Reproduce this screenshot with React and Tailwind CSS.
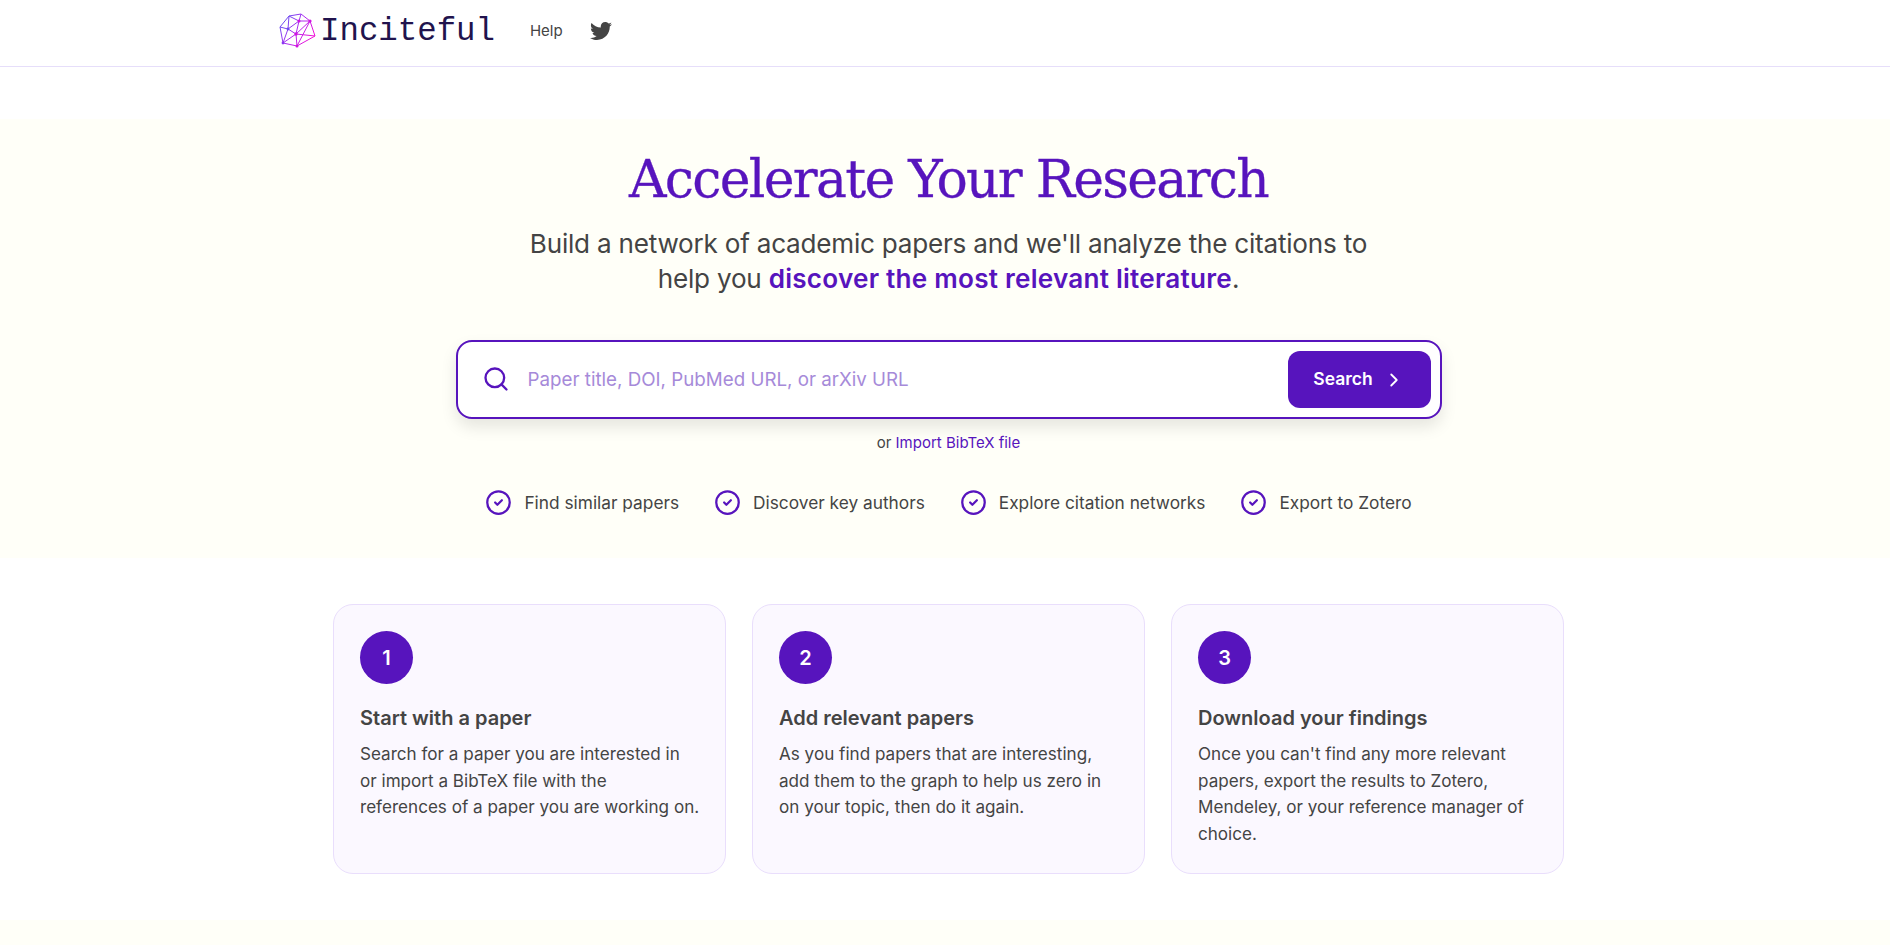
import React from 'react'
import { Search, ChevronRight, CircleCheck } from 'lucide-react'
import { FaTwitter } from 'react-icons/fa'

const features = ['Find similar papers', 'Discover key authors', 'Explore citation networks', 'Export to Zotero']

const steps = [
  {
    title: 'Start with a paper',
    lines: ['Search for a paper you are interested in', 'or import a BibTeX file with the', 'references of a paper you are working on.'],
  },
  {
    title: 'Add relevant papers',
    lines: ['As you find papers that are interesting,', 'add them to the graph to help us zero in', 'on your topic, then do it again.'],
  },
  {
    title: 'Download your findings',
    lines: ["Once you can't find any more relevant", 'papers, export the results to Zotero,', 'Mendeley, or your reference manager of', 'choice.'],
  },
]

function Logo() {
  return (
    <svg viewBox="0 0 38 36" className="w-[38px] h-[36px]" fill="none" strokeWidth="1">
      <defs>
        <linearGradient id="logo-grad" x1="0" y1="0" x2="1" y2="0.6">
          <stop offset="0" stopColor="#4f5bf0" />
          <stop offset="0.55" stopColor="#a92cf0" />
          <stop offset="1" stopColor="#f010d8" />
        </linearGradient>
      </defs>
      <g stroke="url(#logo-grad)">
        <path d="M10 3 L22 1 L31 8 L36 23 L17 21 L4 30 L1 14 L10 3 Z" />
        <path d="M10 3 L20 8 L31 8 L17 21 L20 8 M22 1 L20 8 L9 16 L1 14 M9 16 L17 21 L18 33 L4 30 L9 16 M10 3 L9 16 M31 8 L18 33 M36 23 L18 33" />
      </g>
      <g fill="#d014e0">
        <circle cx="20" cy="8" r="1.5" />
        <circle cx="31" cy="8" r="1.6" />
        <circle cx="17" cy="21" r="1.7" />
        <circle cx="18" cy="33" r="1.5" />
        <circle cx="4" cy="30" r="1.4" fill="#8a35f0" />
        <circle cx="9" cy="16" r="1.4" fill="#6a4df0" />
      </g>
    </svg>
  )
}

export default function App() {
  return (
    <div className="min-h-[945px] bg-white text-[#444444] font-['Inter','Open_Sans',sans-serif] overflow-hidden">
      {/* Header */}
      <header className="h-[67px] border-b border-[#e6defa] bg-white">
        <div className="flex items-center h-[62px] pl-[279px]">
          <Logo />
          <span className="ml-[3px] mt-[2px] text-[32.4px] leading-none text-[#21134d] font-['Liberation_Mono',monospace]">Inciteful</span>
          <a className="ml-[35px] text-[15px] text-[#444444]">Help</a>
          <FaTwitter className="ml-[27px] w-[22px] h-[22px] text-[#444444]" />
        </div>
      </header>

      {/* Hero */}
      <section className="mt-[52px] h-[439px] bg-[#fffff8] flex flex-col items-center pl-[7px]">
        <h1 className="mt-[28px] text-[52px] leading-[64px] text-[#5714bd] font-['DejaVu_Serif',serif] tracking-[-1.7px] [-webkit-text-stroke:0.3px_#5714bd]">Accelerate Your Research</h1>
        <p className="mt-[15px] text-center text-[26.1px] leading-[35px] tracking-[-0.22px]">
          Build a network of academic papers and we'll analyze the citations to
          <br />
          help you <strong className="font-semibold text-[#5714bd] tracking-[0.24px]">discover the most relevant literature</strong>.
        </p>
        <div className="mt-[44px] w-[986px] h-[79px] flex items-center rounded-[16px] border-2 border-[#5714bd] bg-white shadow-[0_8px_16px_rgba(0,0,0,0.1)] pl-[24px] pr-[9px]">
          <Search className="w-[28px] h-[28px] -mt-[1px] text-[#5714bd]" strokeWidth={2} />
          <span className="ml-[18px] mt-[1px] flex-1 text-[18.75px] text-[#a68ad9]">Paper title, DOI, PubMed URL, or arXiv URL</span>
          <button className="w-[143px] h-[57px] rounded-[12px] bg-[#5714bd] text-white font-semibold text-[17.5px] flex items-center justify-center gap-[10px]">
            Search
            <ChevronRight className="w-[22px] h-[22px]" strokeWidth={2} />
          </button>
        </div>
        <p className="mt-[14px] text-[15px] leading-[20px]">
          or <a className="text-[#5714bd]">Import BibTeX file</a>
        </p>
        <ul className="mt-[36px] flex items-center gap-[35px]">
          {features.map((f) => (
            <li key={f} className="flex items-center gap-[12px] text-[17.3px]">
              <CircleCheck className="w-[27px] h-[27px] text-[#5714bd]" strokeWidth={2} />
              {f}
            </li>
          ))}
        </ul>
      </section>

      {/* Steps */}
      <section className="mt-[46px] flex justify-center gap-[26px] pl-[7px]">
        {steps.map((s, i) => (
          <div key={s.title} className="w-[393px] h-[270px] rounded-[20px] border border-[#e9defc] bg-[#fbf8ff] pl-[26px] pr-[26px] pt-[26px]">
            <div className="w-[53px] h-[53px] rounded-full bg-[#5714bd] text-white font-semibold text-[20px] flex items-center justify-center">{i + 1}</div>
            <h3 className="mt-[20px] text-[20px] leading-[28px] font-semibold">{s.title}</h3>
            <p className="mt-[9px] text-[17.1px] leading-[26.5px]">
              {s.lines.map((l) => (
                <span key={l} className="block whitespace-nowrap">{l}</span>
              ))}
            </p>
          </div>
        ))}
      </section>

      <div className="mt-[46px] h-[30px] bg-[#fffff8]" />
    </div>
  )
}
